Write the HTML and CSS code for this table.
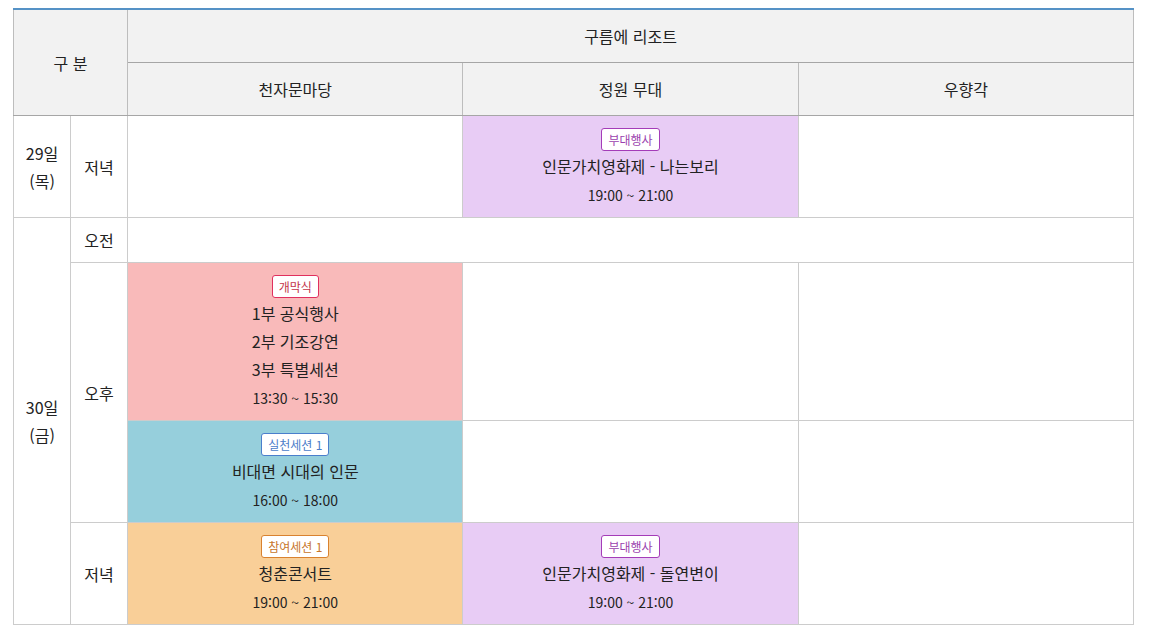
FILE: index.html
```html
<!DOCTYPE html>
<html lang="ko">
<head>
<meta charset="utf-8">
<link rel="stylesheet" href="styles.css">
</head>
<body>
<div class="wrap">
<table class="sched">
  <colgroup>
    <col class="c-day"><col class="c-time"><col class="c-venue"><col class="c-venue"><col class="c-venue">
  </colgroup>
  <thead>
    <tr class="h1">
      <th colspan="2" rowspan="2">구 분</th>
      <th colspan="3">구름에 리조트</th>
    </tr>
    <tr class="h2">
      <th>천자문마당</th>
      <th>정원 무대</th>
      <th>우향각</th>
    </tr>
  </thead>
  <tbody>
    <tr>
      <td class="day">29일<br>(목)</td>
      <td class="time">저녁</td>
      <td></td>
      <td class="ev purple">
        <span class="badge b-purple">부대행사</span>
        <div class="title">인문가치영화제 - 나는보리</div>
        <div class="hours">19:00 ~ 21:00</div>
      </td>
      <td></td>
    </tr>
    <tr class="am">
      <td class="day" rowspan="4">30일<br>(금)</td>
      <td class="time">오전</td>
      <td colspan="3"></td>
    </tr>
    <tr>
      <td class="time" rowspan="2">오후</td>
      <td class="ev pink">
        <span class="badge b-red">개막식</span>
        <div class="title">1부 공식행사</div>
        <div class="title">2부 기조강연</div>
        <div class="title">3부 특별세션</div>
        <div class="hours">13:30 ~ 15:30</div>
      </td>
      <td></td>
      <td></td>
    </tr>
    <tr>
      <td class="ev teal">
        <span class="badge b-blue">실천세션 1</span>
        <div class="title">비대면 시대의 인문</div>
        <div class="hours">16:00 ~ 18:00</div>
      </td>
      <td></td>
      <td></td>
    </tr>
    <tr>
      <td class="time">저녁</td>
      <td class="ev orange">
        <span class="badge b-orange">참여세션 1</span>
        <div class="title">청춘콘서트</div>
        <div class="hours">19:00 ~ 21:00</div>
      </td>
      <td class="ev purple">
        <span class="badge b-purple">부대행사</span>
        <div class="title">인문가치영화제 - 돌연변이</div>
        <div class="hours">19:00 ~ 21:00</div>
      </td>
      <td></td>
    </tr>
  </tbody>
</table>
</div>
</body>
</html>
```

FILE: styles.css
```css
html, body {
  margin: 0;
  padding: 0;
  background: #fff;
}
body {
  font-family: "Malgun Gothic", "Noto Sans CJK KR", "Noto Sans", sans-serif;
  color: #222;
}
.wrap {
  padding: 8px 0 0 13px;
}
.sched {
  width: 1121px;
  border-collapse: collapse;
  table-layout: fixed;
  border-top: 2px solid #5592c6;
  text-align: center;
}
.c-day, .c-time { width: 57px; }
.c-venue { width: 335px; }

.sched th {
  background: #f2f2f2;
  font-weight: normal;
  font-size: 16px;
  color: #222;
  border: 1px solid #bdbdbd;
  border-bottom: 1px solid #a6a6a6;
  height: 52px;
  padding: 0;
}
.sched td {
  border: 1px solid #cccccc;
  padding: 0;
  font-size: 16px;
  vertical-align: middle;
}
.sched td.day, .sched td.time {
  line-height: 28px;
}
.sched tbody tr { height: 102px; }
.sched tbody tr.am { height: 45px; }

.ev {
  padding: 12px 0 7px !important;
}
.pink { background: #f9baba; }
.teal { background: #96cfdc; }
.orange { background: #f9cf98; }
.purple { background: #e8ccf5; }

.badge {
  display: inline-block;
  box-sizing: border-box;
  height: 23px;
  line-height: 21px;
  padding: 0 6px;
  font-size: 12px;
  background: #fff;
  border: 1px solid;
  border-radius: 3px;
  vertical-align: top;
}
.b-purple { color: #9b3fae; border-color: #a43cb8; }
.b-red { color: #c4364a; border-color: #e0305e; }
.b-blue { color: #4a7cc9; border-color: #4a7fcc; }
.b-orange { color: #c7752a; border-color: #d9822f; }

.title {
  font-size: 16px;
  line-height: 28px;
}
.hours {
  font-size: 14px;
  line-height: 30px;
}
```
